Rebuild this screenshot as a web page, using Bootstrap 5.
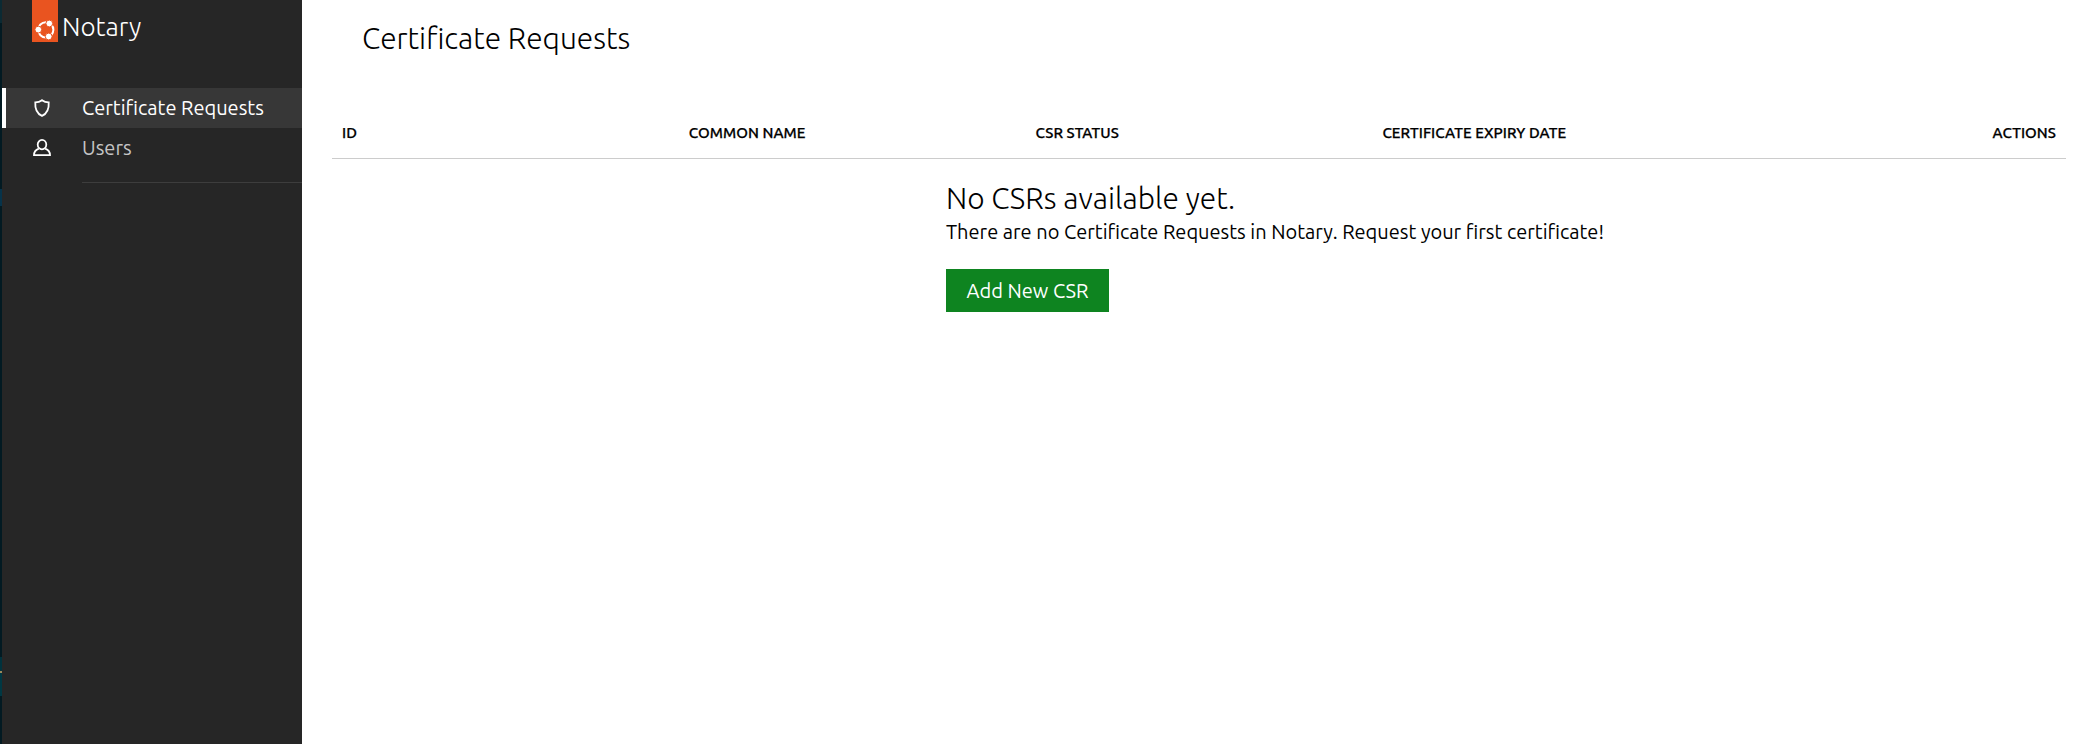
<!DOCTYPE html>
<html lang="en">
<head>
<meta charset="utf-8">
<title>Notary</title>
<link href="https://cdn.jsdelivr.net/npm/bootstrap@5.3.0/dist/css/bootstrap.min.css" rel="stylesheet">
<style>
  body { font-family: Ubuntu, "Noto Sans", "Open Sans", sans-serif; font-size: 20px; line-height: 30px; color: #000; }
  .edge { width: 2px; background: linear-gradient(#0b2a33 0 23px, #021a22 23px 189px, #06334a 189px 206px, #021a22 206px 657px, #00323d 657px 671px, #9c8a5c 671px 673px, #003843 673px 696px, #021a22 696px); }
  .side { width: 300px; background: #262626; color: #fff; }
  .brand { height: 88px; padding-left: 30px; gap: 4px; }
  .tag { width: 26px; height: 42px; background: #e95420; }
  .brand-name { font-size: 26px; line-height: 36px; padding-top: 9px; font-weight: 300; }
  .side .nav-link { height: 40px; padding: 5px 0 5px 30px; color: #c5c5c5; line-height: 30px; }
  .side .nav-link.active { background: #373737; color: #fff; box-shadow: inset 4px 0 #fff; }
  .side .nav-link svg { width: 20px; height: 20px; margin-right: 30px; }
  .rule { margin: 14px 0 0 80px; height: 1px; background: #3d3d3d; }
  .light-h { font-size: 29.9px; line-height: 40px; font-weight: 300; margin: 0; }
  .page-title { padding: 18px 0 0 30px; height: 108px; }
  main { padding: 0 21px 0 30px; }
  .csr { border-collapse: separate; border-spacing: 0; }
  .csr th { width: 20%; font-size: 15px; line-height: 20px; height: 51px; font-weight: 500; letter-spacing: .05px; -webkit-text-stroke: .25px #000; padding: 15px 10px 0; vertical-align: top; border-bottom: 1px solid #ccc; }
  .empty { margin-left: 614px; padding-top: 19px; }
  .empty p { margin: -1px 0 22px; }
  .btn-add { background: #0e8420; color: #fff; border-radius: 0; height: 43px; width: 163px; padding: 7px 0 6px; font-size: 20px; line-height: 30px; border: 0; display: block; }
</style>
</head>
<body class="bg-white">
<div class="d-flex vh-100 overflow-hidden">
  <div class="edge flex-shrink-0"></div>
  <nav class="side flex-shrink-0">
    <div class="brand d-flex align-items-start">
      <svg class="tag" viewBox="0 0 26 42"><circle cx="13.8" cy="29.8" r="7.6" fill="none" stroke="#fff" stroke-width="2"/><g fill="#fff" stroke="#e95420" stroke-width="1"><circle cx="6.3" cy="29.6" r="3.4"/><circle cx="17.3" cy="23.5" r="3.4"/><circle cx="16.7" cy="36.500" r="3.4"/></g></svg>
      <span class="brand-name">Notary</span>
    </div>
    <div class="nav flex-column">
      <a class="nav-link active d-flex align-items-center" href="#"><svg viewBox="0 0 20 20" fill="none" stroke="#fff" stroke-width="1.8"><path d="M10 2.200C8 3.700 5.800 4.300 3.300 4.300C2.900 10.500 4 15.300 10 17.900C16 15.300 17.100 10.500 16.700 4.300C14.200 4.300 12 3.700 10 2.200z"/></svg>Certificate Requests</a>
      <a class="nav-link d-flex align-items-center" href="#"><svg viewBox="0 0 20 20" fill="none" stroke="#fff" stroke-width="1.8"><ellipse cx="10" cy="6.600" rx="4.300" ry="4.700"/><path d="M6.800 10.700C3.300 12 2 14.200 2 17.200H18C18 14.200 16.700 12 13.200 10.700"/></svg>Users</a>
    </div>
    <div class="rule"></div>
  </nav>
  <main class="flex-grow-1">
    <div class="page-title"><h1 class="light-h">Certificate Requests</h1></div>
    <table class="csr w-100">
      <thead><tr><th>ID</th><th>COMMON NAME</th><th>CSR STATUS</th><th>CERTIFICATE EXPIRY DATE</th><th class="text-end">ACTIONS</th></tr></thead>
    </table>
    <div class="empty">
      <h2 class="light-h">No CSRs available yet.</h2>
      <p>There are no Certificate Requests in Notary. Request your first certificate!</p>
      <button class="btn btn-add">Add New CSR</button>
    </div>
  </main>
</div>
<script src="https://cdn.jsdelivr.net/npm/bootstrap@5.3.0/dist/js/bootstrap.bundle.min.js"></script>
</body>
</html>
